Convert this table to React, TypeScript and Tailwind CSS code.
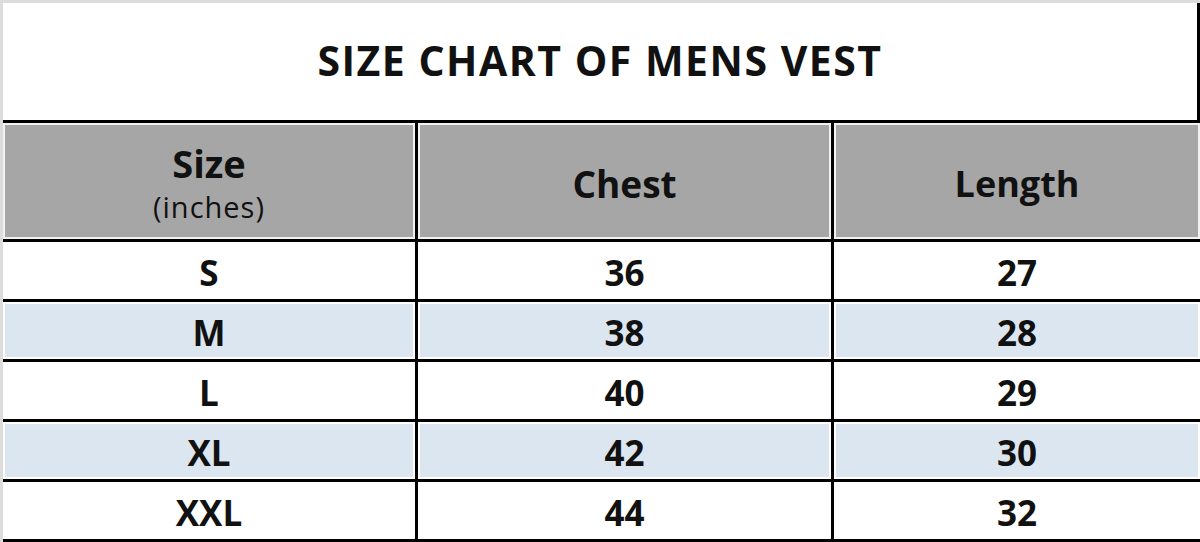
import React from "react";

const rows = [
  ["S", "36", "27"],
  ["M", "38", "28"],
  ["L", "40", "29"],
  ["XL", "42", "30"],
  ["XXL", "44", "32"],
];

export default function App() {
  return (
    <div
      className="w-[1200px] h-[542px] bg-white border-t-[3px] border-l-[3px] border-[#dcdcdc] flex flex-col text-[#111]"
      style={{ fontFamily: '"Open Sans", "Liberation Sans", sans-serif' }}
    >
      <div className="h-[117px] flex items-center justify-center border-r-[3px] border-black">
        <h1 className="text-[41px] font-bold leading-none tracking-[1.5px] pb-[2px]">SIZE CHART OF MENS VEST</h1>
      </div>
      <div className="grid grid-cols-[412px_413px_1fr] grid-rows-[116px_57px_57px_57px_57px_57px] gap-[3px] bg-black border-y-[3px] border-black">
        <div className="bg-[#a6a6a6] border-2 border-[#f2f2f2] flex flex-col items-center justify-center pt-[8px]">
          <span className="text-[38px] font-bold leading-[44px]">Size</span>
          <span className="text-[29px] font-medium leading-[44px] tracking-[1px]">(inches)</span>
        </div>
        <div className="bg-[#a6a6a6] border-2 border-[#f2f2f2] flex items-center justify-center pt-[6px]">
          <span className="text-[37px] font-bold">Chest</span>
        </div>
        <div className="bg-[#a6a6a6] border-2 border-[#f2f2f2] flex items-center justify-center pt-[6px]">
          <span className="text-[36px] font-bold">Length</span>
        </div>
        {rows.map((r, i) =>
          r.map((c, j) => (
            <div
              key={`${i}-${j}`}
              className={`flex items-center justify-center pt-[4px] ${
                i % 2 === 1 ? "bg-[#dce6f1] border-2 border-white" : "bg-white"
              }`}
            >
              <span className="text-[35px] font-bold leading-none">{c}</span>
            </div>
          ))
        )}
      </div>
    </div>
  );
}
